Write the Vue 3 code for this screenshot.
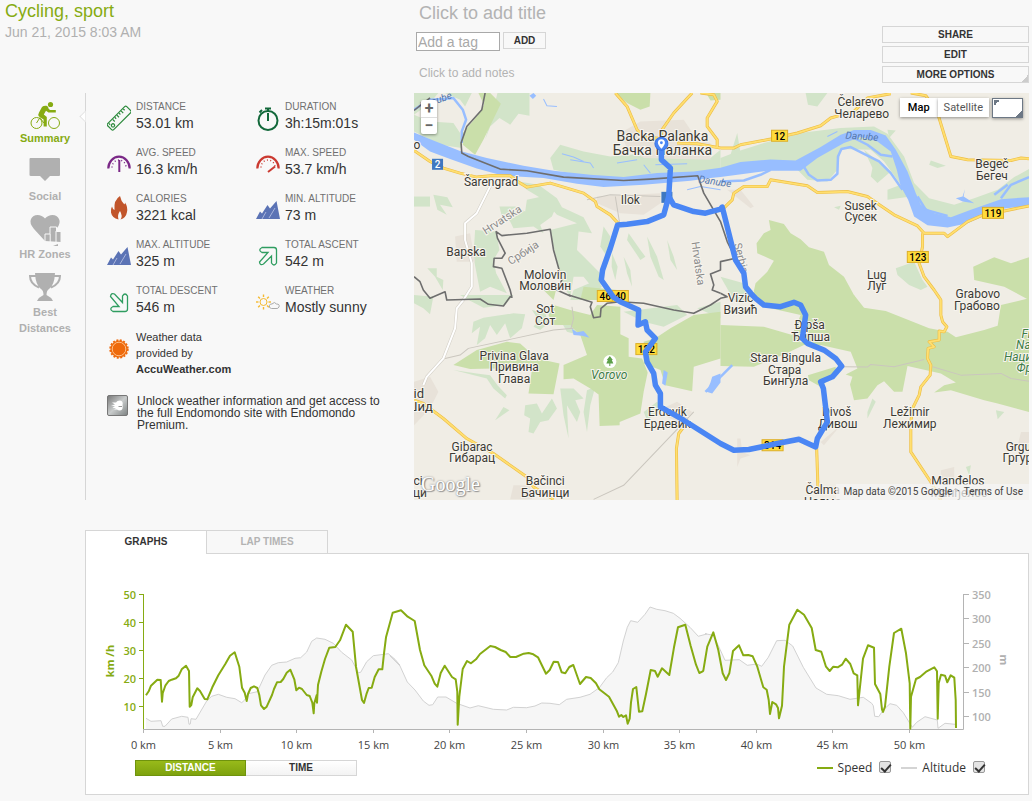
<script setup>
import { ref } from 'vue'

// Drawing sheets: each holds its top-left corner; its points are in thirds of a pixel.
const sheets = {
  A: [410, 90], B: [720, 90], C: [410, 295], D: [720, 295],
  P: [80, 520], Q: [390, 570], R: [700, 570],
}
function trace(...parts) {
  return parts.map((part) => {
    const [x0, y0] = sheets[part[0]]
    return part.slice(1).trim().split(/\s+/).map((pair) => {
      const [x, y] = pair.split(',').map(Number)
      return `${(x0 + x / 3).toFixed(1)},${(y0 + y / 3).toFixed(1)}`
    }).join(' ')
  }).join(' ')
}

const lightGreens = [
  'A 12,10 85,10 60,40 12,75', 'A 105,10 185,10 165,50 150,30', 'A 262,10 358,10 358,78 325,72 300,105 268,85 240,110 225,150 250,60',
  'A 12,75 60,95 130,100 150,130 155,175 90,165 12,125',
  'A 420,205 450,165 520,185 600,200 690,192 900,205 930,180 930,240 850,262 620,265 540,262 430,240',
  'A 12,320 60,320 60,350 12,350', 'A 70,315 112,322 128,352 90,345 110,375 82,360',
  'A 268,350 315,350 345,365 350,330 395,320 440,345 425,380 390,405 400,430 370,410 310,415 300,395 275,380',
  'A 325,275 385,285 440,325 455,352 520,382 545,430 505,425 500,480 540,520 580,560 560,610 520,560 490,560 480,620 460,590 430,470 420,420 500,400 440,375 400,330 350,300',
  'A 195,420 258,425 268,480 250,510 258,550 290,610 240,590 210,605 190,500',
  'A 52,535 80,535 80,560 100,570 98,600 75,560', 'A 580,410 600,440 590,500 570,470', 'A 490,600 560,570 575,590 530,630 480,630',
  'A 655,430 690,480 705,500 690,510 650,450', 'A 710,440 740,500 760,570 745,560 720,500', 'A 640,500 660,540 665,590 650,550',
  'A 770,450 790,500 800,540 780,510', 'A 605,490 622,530 615,570 604,530',
  'B 0,205 50,185 130,160 250,128 360,115 460,110 500,132 550,200 580,280 625,325 700,345 760,325 830,300 880,262 924,238 924,330 840,330 700,385 610,385 570,320 500,330 500,300 540,285 490,215 450,180 360,178 350,240 320,275 260,270 230,240 0,245',
  'B 255,10 320,10 290,50 262,45', 'B 630,212 675,228 650,235 625,225', 'B 340,352 360,348 355,360',
  'B 500,120 525,122 505,145', 'B 525,535 580,515 605,570 620,590 600,600 565,585 530,555', 'B 430,180 490,230 505,250 470,280 450,260 455,235',
  'B 50,130 60,190 30,195', 'B 0,560 70,580 130,630 40,630',
  'C 12,0 70,5 60,58 40,40 12,25', 'C 150,0 310,0 285,30 220,38 170,12', 'C 190,80 220,68 310,55 345,58 335,100 300,130 285,85 260,120 240,90 225,130 200,150 210,95 185,115',
  'C 365,45 405,55 415,85 390,105 370,95 385,75', 'C 640,50 800,30 830,60 760,95 700,80', 'C 450,75 480,90 560,100 570,160 540,130 470,110',
  'C 130,225 200,235 240,240 262,270 290,300 285,310 250,280 230,250', 'C 255,375 280,335 298,345',
  'C 345,330 380,325 395,355 425,310 440,340 415,375 390,380 370,415 355,410 360,370 342,360',
  'C 450,280 490,280 520,310 495,315 510,350 500,380 470,330 475,430 460,360', 'C 530,285 555,275 540,330 530,410 520,350',
  'C 700,350 740,320 760,340 710,375', 'D 440,350 455,310 465,320 440,370', 'D 735,515 750,510 745,540', 'D 825,345 850,350 830,372', 'C 860,40 930,20 930,70',
]
const darkGreens = [
  'A 205,10 240,10 272,42 220,150 195,195 158,165 158,130 200,80 222,45', 'A 615,10 720,10 718,50 690,60 650,40', 'A 870,10 930,10 930,30 900,32 890,15', 'A 400,600 440,590 430,630',
  'B 145,390 190,402 210,430 240,448 265,472 310,485 325,525 370,560 405,625 95,625 105,580 140,545 160,512 110,490 108,460 130,430 150,420',
  'B 757,530 820,502 870,520 924,502 924,630 850,590 760,570',
  'D 80,0 400,0 430,38 495,48 580,82 625,100 680,110 705,127 790,105 830,92 840,30 924,10 924,350 830,325 790,315 690,285 640,292 670,270 705,262 660,235 560,213 545,290 520,290 490,258 470,270 440,310 400,315 388,268 395,245 375,238 410,220 390,170 300,150 250,150 190,178 100,215 0,213 0,90 130,95 215,120 240,60 150,40',
  'D 262,240 345,215 345,235 300,275 265,255',
  'C 130,210 200,165 290,140 330,145 380,190 448,205 430,297 355,295 365,225 250,220 180,222',
  'C 430,30 480,45 540,60 560,30 630,35 630,118 655,130 655,185 695,190 712,232 700,290 690,355 628,380 628,390 568,392 565,298 540,280 490,250 460,252 460,210 530,180 510,120 480,90 430,90 415,60',
  'C 700,140 735,130 780,100 850,60 930,50 930,190 850,215 845,288 765,270 750,225 700,205',
  'A 520,590 620,600 635,630 510,630',
]
const towns = [
  'A 630,130 690,95 820,90 860,150 900,160 900,210 700,205 650,175', 'A 560,320 750,310 750,340 700,375 630,370 560,340', 'A 135,440 180,430 195,515 140,515',
  'C 12,260 60,245 85,290 60,340 12,390', 'C 765,335 800,320 845,350 815,385 770,365', 'B 20,300 60,300 100,350 90,355', 'D 300,440 360,390 310,450', 'D 50,430 60,430 65,470 90,480 60,490 50,515', 'C 310,570 360,570 365,612 300,612', 'D 660,525 700,515 700,550 660,555', 'D 900,410 924,410 924,455 890,450',
]
const rivers = [
  ['A 12,128 70,152 150,184 230,205 340,228 430,243 540,255 640,262 740,250 850,245 930,234', 'B 60,217 150,209 225,212 300,172 360,135 400,121 450,121 495,137 525,180 560,245 585,310 600,345 640,370 690,382 750,360 840,328 924,322', 'B 924,348 850,356 780,382 740,400 680,413 620,406 580,380 562,330 540,290 528,240 510,185 470,155 420,142 370,160 290,205 240,243 140,243 0,262', 'A 900,265 840,273 700,285 580,292 500,282 400,265 280,258 200,236 120,208 60,185 12,150'],
  ['C 485,102 500,112 520,108 538,128 515,122 490,120'], ['C 760,225 772,232 765,272 755,265'], ['C 930,235 905,245 900,262 888,290 905,295 930,262'],
  ['B 705,325 725,320 732,298 728,320 760,340 725,335'], ['A 358,18 370,10 378,18 368,28'],
]
const streams = [
  'A 12,60 60,30 100,28 130,25 158,60 168,90 155,125 155,160', 'B 240,215 265,255 290,272 330,270 350,252 352,200 362,178 390,172 430,192 475,215 510,250 545,300', 'B 380,135 440,165 480,195 515,200', 'B 590,320 615,360 680,378', 'B 840,325 870,285 924,262', 'B 0,275 70,272 120,255 150,240', 'B 820,315 860,285', 'C 885,290 930,245', 'D 0,245 35,210',
]
const thinStreams = ['A 400,28 410,48 440,50', 'A 455,192 490,202 520,215', 'A 480,210 540,220 550,235', 'A 620,220 680,210', 'A 735,225 830,222', 'A 700,225 720,250', 'A 830,300 870,290 930,300', 'B 320,140 350,125']
const grayRoads = [
  'C 105,190 150,180 175,160 300,133 430,105 490,100', 'C 485,35 490,70 482,100', 'C 550,612 640,570 850,350', 'D 370,215 440,216 450,208 520,215 610,193', 'D 635,215 720,240 840,235 870,250 924,258', 'A 530,330 600,315 750,320', 'A 628,400 615,320',
]
const whiteRoads = ['A 245,280 200,370 165,400 165,450 185,520 185,590 160,630', 'C 160,15 140,40 135,100 100,190 50,245 40,270']
const yellowRoads = [
  ['A 12,182 60,215 100,235 150,250 200,262 250,257 300,258 330,280 350,292 420,280 470,295 520,310 555,335 560,350 600,375 625,402'],
  ['A 615,10 650,50 680,120 700,142 750,146'], ['A 845,10 790,70 755,120 750,150'], ['A 800,160 860,162 930,175'], ['A 870,10 910,15 920,35 890,85 890,110 920,150 920,175'],
  ['B 0,175 40,175 60,165 150,148 230,130 300,108 330,85 400,65 440,25 510,12'], ['B 570,10 615,18 650,70 690,200 740,210 870,212 900,205 924,207'],
  ['B 10,355 35,330 40,310 70,290 140,290 150,270 260,288 290,308 380,305 440,320 480,348 520,375 590,408 610,430 670,430 680,440 740,395 780,378 924,348'],
  ['B 605,430 605,470 595,520 610,560 640,600 655,622', 'D 660,15 660,60 665,80 678,95 670,110 655,108 655,135 625,140 640,155 622,160 620,190 630,210 628,240 600,275 595,300 575,340 570,380 570,470 630,560 660,615'],
  ['D 288,460 292,575'], ['C 12,315 40,325 100,370 170,430 250,475 350,545 370,575 430,612'], ['C 835,375 805,415 798,460 800,615'],
]
const borders = [
  ['A 225,10 215,60 170,110 153,160 155,190 175,200 270,238 350,243 460,262 640,272 720,268 862,258 880,310 930,395', 'B 20,455 45,505 0,515', 'A 930,540 900,552 910,585 905,600 930,610'],
  ['C 475,0 480,2', 'A 480,618 440,600 455,570', 'A 455,570 430,480 420,418 350,430 275,437 258,425 262,445 285,490 275,505 252,505 250,530 275,535 300,600 305,622', 'C 300,5 280,33 235,28 210,12 110,15', 'A 105,605 60,625 40,600 30,575 12,560'],
  ['C 475,0 545,22 540,35 550,68 570,65 572,40 590,25 630,20 700,25 790,45 850,55 900,30 930,10', 'D 20,5 0,-5'],
  ['A 12,62 60,25'],
]
const route = trace(
  'A 753,170 753,210 780,235 775,320 760,375 710,395 650,403 622,405 600,475 577,540 573,570 610,622',
  'C 630,20 685,45 683,90 705,80 710,105 735,130 705,170 710,200 730,235 735,270 750,295 750,335 820,375 930,445',
  'D 40,465 85,463 170,445 235,432 285,455 290,430 320,380 308,280 300,260 335,245 363,213 345,190 310,165 260,145 245,130 255,60 240,30 220,22 180,35 130,30 105,10',
  'B 95,615 75,590 70,550 45,510 30,450 10,370 5,352',
  'A 930,358 885,370 850,365 790,345 775,320',
)

const places = [
  ['Čelarevo', 860, 106], ['Челарево', 861, 118], ['Begeč', 991, 168], ['Бегеч', 991, 180], ['Susek', 860, 210], ['Сусек', 860, 221],
  ['Lug', 876, 279], ['Луг', 876, 290], ['Grabovo', 977, 298], ['Грабово', 976, 310], ['Bapska', 466, 256], ['Ilok', 630, 204],
  ['Šarengrad', 491, 186], ['Molovin', 545, 279], ['Моловин', 545, 290], ['Sot', 545, 313], ['Сот', 545, 325],
  ['Privina Glava', 514, 360], ['Привина', 514, 371], ['Глава', 514, 383], ['Erdevik', 667, 416], ['Ердевик', 667, 428],
  ['Gibarac', 472, 451], ['Гибарац', 472, 462], ['Bačinci', 545, 485], ['Бачинци', 545, 497], ['Vizić', 740, 302], ['Визић', 740, 314],
  ['Đipša', 809, 329], ['Ђипша', 810, 341], ['Stara Bingula', 785, 362], ['Стара', 784, 374], ['Бингула', 785, 385],
  ['Divoš', 836, 416], ['Дивош', 837, 428], ['Ležimir', 909, 416], ['Лежимир', 909, 428], ['Čalma', 822, 494], ['Чалма', 822, 506],
  ['Manđelos', 957, 485], ['Манђелос', 958, 497], ['o', 417, 149], ['ci', 418, 485], ['ци', 420, 497],
  ['Grgurevci', 1030, 451], ['Гргуревци', 1030, 462],
]
const tilted = [
  ['Danube', 714, 185, 9, 'water'], ['Danube', 861, 140, 4, 'water'], ['Danube', 437, 104, -20, 'water'],
  ['Hrvatska', 504, 223, -33, 'country'], ['Србија', 525, 256, -33, 'country'], ['Hrvatska', 694, 264, 82, 'country'], ['Serbia', 737, 259, 76, 'country'],
]
const shields = [['12', 779, 136, 16], ['119', 992, 213, 21], ['123', 917, 257, 21], ['46', 605, 296, 16], ['40', 620, 296, 16], ['122', 646, 349, 21], ['314', 772, 445, 21]]

const speed = trace(
  'P 198,526 206,514 213,497 232,479 242,480 246,545 248,520 256,497 266,483 275,479 288,475 296,467 305,448 318,437 327,453 329,560 334,555 338,532 352,505 360,513 374,537 382,538 397,502 415,466 436,432 450,407 464,397 478,440 486,503 494,518 500,543 504,522 512,504 522,499 532,504 538,525 543,556 552,567 560,560 576,525 582,507 591,487 602,486 610,477 620,458 631,449 643,478 649,511 657,503 666,507 680,525 689,528 697,548 701,580 703,550 710,525 711,548 714,495 724,455 735,417 748,383 766,381 780,361 798,314 818,335 828,440 846,540 852,549 860,520 866,504 875,503 884,471 896,448 907,448 912,400 918,352 938,278 963,271',
  'Q 53,140 74,153 90,240 103,286 124,317 134,341 142,350 152,309 164,287 186,321 197,328 202,365 203,464 208,380 218,297 231,273 243,280 258,268 270,252 301,228 315,231 332,240 347,246 361,261 378,261 401,251 416,249 430,253 444,262 468,311 479,300 491,275 504,276 515,307 526,310 538,291 550,285 570,342 588,321 602,324 618,340 628,358 657,380 680,422 687,440 694,435 700,441 708,436 713,461 719,446 723,397 729,357 739,351 747,425 757,424 768,372 782,300 795,303 803,320 816,295 838,315 852,232 864,172 886,164 902,228 918,284 928,309 938,304',
  'R 10,302 22,230 40,187 55,240 68,310 78,330 88,310 99,243 117,226 130,256 145,255 158,259 172,290 190,352 200,359 206,390 210,432 217,396 228,403 234,414 237,445 246,407 252,290 268,164 292,119 312,134 335,174 347,240 364,245 378,290 389,303 400,290 413,292 426,284 437,266 451,282 461,310 472,316 474,406 489,266 504,226 522,233 525,342 541,372 546,418 549,426 555,410 568,290 582,189 604,176 618,250 629,340 631,476 633,380 648,327 660,321 680,304 703,292 711,304 713,446 716,340 723,314 735,317 742,337 752,316 763,323 767,390 768,474',
)
const altitude = trace(
  'P 198,595 213,604 243,602 248,619 255,619 275,597 305,589 324,592 327,613 331,612 333,596 348,598 380,543 395,529 415,523 440,532 465,536 485,548 494,540 505,521 532,515 555,465 575,436 595,428 620,426 645,415 662,413 680,396 695,364 710,354 735,358 760,370 785,397 815,420 835,458 842,457 860,425 880,407 925,401 945,418 960,436',
  'Q 0,257 30,288 52,336 75,360 100,393 117,406 128,404 143,381 168,381 200,400 240,414 265,407 310,418 350,420 370,412 410,413 435,408 455,399 480,400 508,404 530,388 570,382 600,373 628,353 650,323 668,306 685,278 700,213 712,172 722,152 743,157 765,133 780,111 800,118 825,122 850,130 870,145 900,172 925,199 950,192',
  'R 15,191 40,196 60,238 75,271 118,269 142,286 170,282 185,289 205,262 230,212 255,211 278,228 310,292 348,354 380,373 415,377 450,388 490,382 515,400 520,407 524,439 536,440 550,420 570,401 590,406 610,428 637,472 650,457 675,440 712,450 714,475 735,460 765,463',
)
const altitudeArea = `146,729 ${altitude} 955,729`

const metrics = [
  ['ruler', 'Distance', '53.01 km'], ['watch', 'Duration', '3h:15m:01s'],
  ['avg', 'Avg. speed', '16.3 km/h'], ['max', 'Max. speed', '53.7 km/h'],
  ['flame', 'Calories', '3221 kcal'], ['hills', 'Min. altitude', '73 m'],
  ['hills', 'Max. altitude', '325 m'], ['ascent', 'Total ascent', '542 m'],
  ['descent', 'Total descent', '546 m'], ['weather', 'Weather', 'Mostly sunny'],
]
const nav = [['bike', 'Summary'], ['social', 'Social'], ['heart', 'HR Zones'], ['cup', 'Best Distances']]
const rays = Array.from({ length: 8 }, (_, i) => i * 45)
const kmTicks = Array.from({ length: 11 }, (_, i) => ({ x: 143.5 + Math.round(i * 76.6), text: `${i * 5} km` }))
const speedTicks = [50, 40, 30, 20, 10].map((value, i) => ({ value, y: 594.5 + i * 28 }))
const altTicks = [350, 300, 250, 200, 150, 100].map((value, i) => ({ value, y: 594.5 + Math.round(i * 24.4) }))

const showSpeed = ref(true)
const showAltitude = ref(true)
const mode = ref('Distance')
const tag = ref('')
</script>

<template>
  <main class="page">
    <header class="top">
      <div class="heading">
        <h1>Cycling, sport</h1>
        <time>Jun 21, 2015 8:03 AM</time>
      </div>
      <div class="notes">
        <button class="ghost big">Click to add title</button>
        <form class="tags" @submit.prevent>
          <input v-model="tag" type="text" aria-label="Add a tag" placeholder="Add a tag">
          <button class="btn add">ADD</button>
        </form>
        <button class="ghost">Click to add notes</button>
      </div>
      <div class="actions">
        <button class="btn">SHARE</button>
        <button class="btn">EDIT</button>
        <button class="btn more">MORE OPTIONS</button>
      </div>
    </header>

    <div class="body">
      <nav class="side">
        <a v-for="([icon, text], i) in nav" :key="text" href="#" :class="{ on: i === 0 }">
          <svg width="34" height="32" viewBox="0 0 34 32">
            <g v-if="icon === 'bike'">
              <g fill="none" stroke="currentColor"><circle cx="8.500" cy="25" r="5.500" /><circle cx="26" cy="25" r="5.500" /></g>
              <circle cx="22.500" cy="6.500" r="2.600" fill="currentColor" />
              <path d="M14 9 Q15.500 7.500 18.500 7.800 Q20.500 8.500 20.500 10.500 L22 12 H27.800 V14.500 H20.500 L18 12.800 L15.800 16.500 L18.800 19 V28.500 H15.600 V21.500 L11 18.500 Q9.500 17 11 14.500Z" fill="currentColor" />
              <path d="M8.500 25 L12 19.500 L15.800 25" fill="none" stroke="currentColor" />
            </g>
            <path v-else-if="icon === 'social'" d="M2.500 2 H31 Q32 2 32 3 V19 Q32 20 31 20 H22 L17 25 L12 20 H3 Q1.500 20 1.500 19 V3 Q1.500 2 2.500 2Z" fill="currentColor" />
            <g v-else-if="icon === 'heart'">
              <path d="M17 27 L6 15 Q1 9 3 5 Q5 1 9.500 1 Q14 1 17 4.500 Q20 1 24.500 1 Q29 1 31 5 Q33 9 29 14Z" fill="currentColor" />
              <path d="M17 27 V20 H22 V13 H28.500 V17.500 H33 V28" fill="currentColor" stroke="#f8f8f8" />
              <path d="M22.200 20 V28 M28 17 V28" stroke="#f8f8f8" />
              <path d="M25 32 L30 30 V32Z" fill="currentColor" />
            </g>
            <g v-else>
              <path d="M7 1 H27 Q26.500 13 21 17 Q18.500 18.500 18.500 23 Q23 25 25 29 H9 Q11 25 15.500 23 Q15.500 18.500 13 17 Q7.500 13 7 1Z" fill="currentColor" />
              <path d="M8 4 H2 Q2 12 11 15.500 M26 4 H32 Q32 12 23 15.500" fill="none" stroke="currentColor" stroke-width="2" />
            </g>
          </svg>
          <span>{{ text }}</span>
        </a>
      </nav>

      <section class="summary">
        <i class="pointer"></i>
        <div class="metrics">
          <div v-for="[icon, label, value] in metrics" :key="label" class="metric">
            <svg width="24" height="30" viewBox="0 0 24 30">
              <g v-if="icon === 'ruler'" transform="rotate(-45 12 17)" fill="none" stroke="#2c8a3c" stroke-width="1.200">
                <rect x="-1.500" y="13" width="27" height="8.500" rx="1.500" /><circle cx="2.500" cy="18" r="1.600" />
                <path d="M6.500 13.500 V16.500 M9.500 13.500 V15.500 M12.500 13.500 V16.500 M15.500 13.500 V15.500 M18.500 13.500 V16.500 M21.500 13.500 V15.500 M1 13.500 V15.500" />
              </g>
              <g v-else-if="icon === 'watch'" fill="none" stroke="#12683a" stroke-width="2">
                <circle cx="12" cy="19.500" r="9.500" /><path d="M9 7.500 H15 M12 7 V10 M3.500 11.500 L6 9 M12 12 V20" />
              </g>
              <g v-else-if="icon === 'avg' || icon === 'max'" :stroke="icon === 'avg' ? '#7b2987' : '#cb3a31'" fill="none">
                <path d="M1.300 21.500 A10.700 11.800 0 1 1 22.700 21.500" stroke-width="2.200" />
                <path d="M5 20.500 A7 7.500 0 0 1 19 20.500" stroke-width="1.400" stroke-dasharray="1 2.400" />
                <path v-if="icon === 'avg'" d="M12.300 13 V25" stroke-width="2" />
                <path v-else d="M12 25 L19 19.500" stroke-width="2" />
              </g>
              <path v-else-if="icon === 'flame'" d="M13 3 Q14 8 17 11 Q18 12 18 9.500 Q21 14 20 19 Q19 25 13.500 26.500 Q16 23 13 18 Q10 22 11.500 26.500 Q5 25 4 19.500 Q3.500 16 5 13.500 Q5.500 16 7.500 17 Q6.500 7 13 3Z" fill="#c1552b" />
              <g v-else-if="icon === 'hills'">
                <path d="M0 26 L4 18.500 L6 20.500 L11.500 12 L14 15.500 L20.500 8 L24 26Z" fill="#5b73b5" />
                <path d="M6 26 L10 19 M13 25 L19 15" stroke="#a9b5dc" fill="none" />
              </g>
              <path v-else-if="icon === 'ascent'" d="M6 8.500 H18 Q20.500 8.500 20.500 11 V24 Q18 28 15.500 24 V17 L7.500 25 Q4 27 3.500 23 L12 13.500 H6 Q1.500 11 6 8.500Z" fill="none" stroke="#2f9d60" stroke-width="1.300" />
              <path v-else-if="icon === 'descent'" d="M6 26.500 H18 Q20.500 26.500 20.500 24 V11 Q18 7 15.500 11 V17.500 L7.500 9 Q4 7.500 3.500 11.500 L12 21.500 H6 Q1.500 24 6 26.500Z" fill="none" stroke="#2f9d60" stroke-width="1.300" />
              <g v-else fill="none" transform="translate(0 2)">
                <circle cx="7.500" cy="15" r="3.500" stroke="#f5b92e" />
                <path v-for="r in rays" :key="r" d="M7.500 10 V7.500" :transform="`rotate(${r} 7.500 15)`" stroke="#f5b92e" stroke-width="1.400" />
                <path d="M15.500 21.500 Q12.500 21 13.500 18.500 Q14 16.500 16 17 Q18.500 14 20.500 17 Q24 17 23 20 Q22 22 20 21.500Z" fill="#f8f8f8" stroke="#aaa" />
              </g>
            </svg>
            <div><small>{{ label }}</small><b>{{ value }}</b></div>
          </div>
        </div>
        <div class="provider">
          <svg width="24" height="24" viewBox="0 0 24 24">
            <circle cx="12" cy="12" r="8.600" fill="#ee6a0c" />
            <circle cx="12" cy="12" r="8.800" fill="none" stroke="#ee6a0c" stroke-width="1.800" stroke-dasharray="2 1.500" />
            <circle cx="12" cy="12" r="6.800" fill="none" stroke="#ffc088" />
          </svg>
          <p>Weather data<br>provided by<br><a href="#">AccuWeather.com</a></p>
        </div>
        <div class="premium">
          <svg width="21" height="21" viewBox="0 0 21 21">
            <defs><linearGradient id="steel" x2="1" y2="1"><stop stop-color="#777" /><stop offset="0.500" stop-color="#c9cccc" /><stop offset="1" stop-color="#7c8181" /></linearGradient></defs>
            <rect x="0.500" y="0.500" width="20" height="20" rx="1.500" fill="url(#steel)" stroke="#777" />
            <path d="M5 7.500 H9 Q10 5.500 13 5.500 Q16.500 6 15.500 10 Q16.500 15 13 15.500 Q11 15.500 10 14.500 H7 L9 13 H5.500 L8 11 H4 L8 9.500Z" fill="#fff" /><path d="M11.500 11.500 H15" stroke="#999" />
          </svg>
          <p>Unlock weather information and get access to the full Endomondo site with Endomondo Premium.</p>
        </div>
      </section>

      <section class="map">
        <svg class="canvas" viewBox="414 93 614 407" preserveAspectRatio="xMidYMid slice">
          <rect x="414" y="93" width="614" height="407" fill="#f0ede5" />
          <polygon v-for="(p, i) in lightGreens" :key="'l' + i" :points="trace(p)" fill="#d2e4c9" />
          <polygon v-for="(p, i) in darkGreens" :key="'d' + i" :points="trace(p)" fill="#cadfaa" />
          <polygon v-for="(p, i) in towns" :key="'t' + i" :points="trace(p)" fill="#e8e2d9" />
          <polygon v-for="(p, i) in rivers" :key="'r' + i" :points="trace(...p)" fill="#98beff" />
          <g fill="none" stroke-linejoin="round">
            <polyline v-for="(p, i) in streams" :key="'s' + i" :points="trace(p)" stroke="#98beff" stroke-width="2.500" />
            <polyline v-for="(p, i) in thinStreams" :key="'h' + i" :points="trace(p)" stroke="#98beff" />
            <polyline v-for="(p, i) in grayRoads" :key="'g' + i" :points="trace(p)" stroke="#cac6be" />
            <polyline v-for="(p, i) in whiteRoads" :key="'w' + i" :points="trace(p)" stroke="#d2cec5" stroke-width="3" />
            <polyline v-for="(p, i) in whiteRoads" :key="'v' + i" :points="trace(p)" stroke="#fff" stroke-width="2" />
            <polyline v-for="(p, i) in yellowRoads" :key="'o' + i" :points="trace(...p)" stroke="#edbd45" stroke-width="3" />
            <polyline v-for="(p, i) in yellowRoads" :key="'y' + i" :points="trace(...p)" stroke="#ffdf70" stroke-width="1.800" />
            <polyline v-for="(p, i) in borders" :key="'b' + i" :points="trace(...p)" stroke="#6e6e6e" stroke-width="1.600" />
          </g>
          <g v-for="[text, x, y, w] in shields" :key="text" class="shield">
            <rect :x="x - w / 2" :y="y - 5.500" :width="w" height="11" fill="#ffdc3c" stroke="#dcae28" />
            <text :x="x" :y="y + 4">{{ text }}</text>
          </g>
          <g class="shield"><rect x="432" y="159" width="11" height="11" fill="#3f78c0" /><text x="437.500" y="168" class="blue">2</text></g>
          <rect x="661" y="192" width="11" height="11" fill="#3f78c0" />
          <g class="places">
            <text v-for="[text, x, y] in places" :key="text" :x="x" :y="y">{{ text }}</text>
            <g class="city"><text x="662" y="141">Backa Palanka</text><text x="662" y="155">Бачка Паланка</text></g>
            <text x="415" y="398" class="mid">Šid</text><text x="419" y="411" class="mid">Шид</text>
            <text v-for="([text, x, y, turn, kind], i) in tilted" :key="i" :x="x" :y="y" :class="kind" :transform="`rotate(${turn} ${x} ${y})`">{{ text }}</text>
            <g class="park"><text x="609" y="379">Vorovo</text><text x="1038" y="338">Fruška</text><text x="1038" y="349">Nacional</text><text x="1037" y="361">Национални</text><text x="1037" y="372">Фрушка</text></g>
          </g>
          <circle cx="609.500" cy="361.500" r="6.500" fill="#fff" />
          <path d="M609.500 356 L612.500 360 H611.500 L613 363.500 H610 V366 H609 V363.500 H606 L607.500 360 H606.500Z" fill="#5da04a" />
          <polyline :points="route" fill="none" stroke="#4a86f4" stroke-width="5.500" stroke-linejoin="round" stroke-linecap="round" />
          <circle cx="661" cy="144" r="6.500" fill="#4a86f4" stroke="#3874e6" />
          <path d="M661 149 Q657.500 145 657.500 143 A3.500 3.500 0 0 1 664.500 143 Q664.500 145 661 149Z" fill="#fff" /><circle cx="661" cy="143" r="1.400" fill="#4a86f4" />
        </svg>
        <div class="zoom"><button aria-label="Zoom in">+</button><button aria-label="Zoom out">−</button></div>
        <div class="types">
          <button class="sel">Map</button><button>Satellite</button>
          <button class="full" aria-label="Full screen"></button>
        </div>
        <span class="google">Google</span>
        <div class="credit">Map data ©2015 Google <span>·</span> <a href="#">Terms of Use</a></div>
      </section>
    </div>

    <section class="graphs">
      <div class="tabs">
        <button class="on">GRAPHS</button><button>LAP TIMES</button>
      </div>
      <div class="panel">
        <svg class="chart" viewBox="86 554 942 200">
          <template v-if="showAltitude">
            <polygon :points="altitudeArea" fill="#f6f6f6" />
            <polyline :points="altitude" fill="none" stroke="#d2d2d2" />
          </template>
          <path d="M143 729.500 H963.500 V594" fill="none" stroke="#b4b4b4" />
          <path d="M143.500 594 V729" stroke="#86ab12" />
          <g v-for="t in kmTicks" :key="t.text"><path :d="`M${t.x} 730 V733`" stroke="#b4b4b4" /><text :x="t.x" y="749" text-anchor="middle" class="km">{{ t.text }}</text></g>
          <g v-for="t in speedTicks" :key="t.value"><path :d="`M139 ${t.y} H143`" stroke="#86ab12" /><text x="136" :y="t.y + 4" text-anchor="end" class="kmh">{{ t.value }}</text></g>
          <g v-for="t in altTicks" :key="t.value"><path :d="`M964 ${t.y} H969`" stroke="#b4b4b4" /><text x="972" :y="t.y + 4" class="alt">{{ t.value }}</text></g>
          <text x="114" y="661" transform="rotate(-90 114 661)" text-anchor="middle" class="axis">km /h</text>
          <text x="1000" y="660" transform="rotate(90 1000 660)" text-anchor="middle" class="axis metres">m</text>
          <polyline v-if="showSpeed" :points="speed" fill="none" stroke="#86ab12" stroke-width="2" stroke-linejoin="round" />
        </svg>
        <div class="controls">
          <div class="switch">
            <button v-for="m in ['Distance', 'Time']" :key="m" :class="{ on: mode === m }" @click="mode = m">{{ m }}</button>
          </div>
          <div class="legend">
            <label><i></i>Speed <input v-model="showSpeed" type="checkbox"></label>
            <label><i class="pale"></i>Altitude <input v-model="showAltitude" type="checkbox"></label>
          </div>
        </div>
      </div>
    </section>
  </main>
</template>

<style>
body { background: #f8f8f8; }
</style>

<style scoped>
* { box-sizing: border-box; }
.page { font-family: "Liberation Sans", Arial, sans-serif; color: #333; padding-right: 3px; overflow: hidden; }
button { font: inherit; color: inherit; margin: 0; padding: 0; cursor: pointer; }
a { color: inherit; text-decoration: none; }
h1, p { margin: 0; }
.top { display: grid; grid-template-columns: 414px 1fr 147px; height: 93px; }
.heading { padding-left: 5px; }
h1 { font-size: 18px; line-height: 22px; font-weight: 400; color: #86ab12; }
time { display: block; font-size: 14px; line-height: 20px; color: #b0b0b0; }
.notes { display: flex; flex-direction: column; align-items: flex-start; padding-left: 2px; }
.ghost { border: 0; background: none; padding-left: 3px; color: #b3b3b3; font-size: 12px; line-height: 16px; }
.big { font-size: 18px; line-height: 26px; }
.tags { display: flex; gap: 3px; margin: 6px 0 14px; }
.tags input { width: 84px; height: 19px; border: 1px solid #a9a9a9; background: #fff; font: 14px "Liberation Sans", Arial, sans-serif; padding: 0 1px; }
.tags input::placeholder { color: #a9a9a9; opacity: 1; }
.btn { border: 1px solid #d6d6d6; background: #f8f8f8; height: 17px; font-size: 10px; line-height: 15px; font-weight: 700; }
.add { width: 43px; }
.actions { display: flex; flex-direction: column; gap: 3px; padding-top: 26px; }
.more { background: linear-gradient(135deg, transparent 50%, #ccc 50%) right bottom / 6px 8px no-repeat; }
.body { display: grid; grid-template-columns: 85px 329px 1fr; }
.side { display: flex; flex-direction: column; gap: 10px; padding: 5px 10px 0 15px; }
.side a { display: flex; flex-direction: column; align-items: center; text-align: center; font-size: 11px; font-weight: 700; line-height: 16px; color: #b0b0b0; }
.side a.on { color: #86ab12; }
.side svg { display: block; }
.summary { position: relative; border-left: 1px solid #d6d6d6; padding: 8px 0 0 21px; }
.pointer { position: absolute; left: -5px; top: 19px; width: 9px; height: 9px; background: #fff; border: 1px solid #dcdcdc; border-width: 0 0 1px 1px; transform: rotate(45deg); clip-path: polygon(0 0, 100% 100%, 0 100%); }
.metrics { display: grid; grid-template-columns: 149px 1fr; }
.metric { display: flex; gap: 5px; height: 46px; }
.metric small { display: block; font-size: 10px; line-height: 12px; color: #707070; text-transform: uppercase; }
.metric b { display: block; font-size: 14px; line-height: 20px; font-weight: 400; }
.provider { display: flex; gap: 5px; }
.provider svg { margin-top: 6px; }
.provider p { font-size: 11px; line-height: 16px; margin-top: -2px; }
.provider a { font-weight: 700; }
.premium { display: flex; gap: 9px; padding-top: 18px; }
.premium svg { flex: none; }
.premium p { font-size: 12px; line-height: 12px; width: 250px; }
.map { position: relative; aspect-ratio: 615 / 407; overflow: hidden; font-family: Roboto, sans-serif; }
.canvas { display: block; width: 100%; height: 100%; }
.shield text { font-size: 10px; font-weight: 500; text-anchor: middle; }
.shield .blue { fill: #fff; }
.places text { font-size: 12px; text-anchor: middle; fill: #3b3a35; stroke: #f7f4ee; stroke-width: 2px; paint-order: stroke; }
.places .city text { font-size: 14px; }
.places text.mid { font-size: 13px; }
.places text.water { font-size: 10px; fill: #5577ad; font-style: italic; stroke: none; }
.places text.country { font-size: 11px; fill: #8b8b8b; }
.places .park text { fill: #3c7d46; font-style: italic; }
.zoom { position: absolute; left: 7px; top: 7px; width: 16px; background: #fff; border-radius: 2px; box-shadow: 0 1px 3px #0006; }
.zoom button { display: block; width: 100%; height: 17px; border: 0; background: none; color: #666; font-size: 16px; line-height: 16px; font-weight: 700; }
.zoom button + button { border-top: 1px solid #ddd; }
.types { position: absolute; right: 6px; top: 5px; display: flex; font-size: 11px; }
.types button { height: 19px; padding: 0 6px; border: 0; background: #fff; color: #555; box-shadow: 0 1px 3px #0006; }
.types .sel { padding: 0 8px; color: #000; font-weight: 500; }
.types .full { width: 31px; height: 20px; margin-left: 3px; border: 1px solid #6d7885; background: linear-gradient(135deg, #6d7885 50%, transparent 50%) 1px 1px / 6px 6px no-repeat, linear-gradient(135deg, transparent 50%, #6d7885 50%) right bottom / 6px 6px no-repeat, #fff; }
.google { position: absolute; left: 7px; bottom: 2px; font: 20px/28px "Liberation Serif", serif; color: #fff; text-shadow: 0 0 2px #777, 1px 1px 1px #999; }
.credit { position: absolute; right: 0; bottom: 0; padding: 0 6px 0 7px; height: 16px; font-size: 10px; line-height: 16px; color: #444; background: #f5f5f5b8; }
.credit span { margin: 0 2px; }
.graphs { margin: 30px 0 0 85px; }
.tabs { display: flex; position: relative; }
.tabs button { width: 122px; height: 24px; padding-bottom: 2px; border: 1px solid #d6d6d6; background: #f8f8f8; font-size: 10px; font-weight: 700; color: #b3b3b3; }
.tabs button.on { background: #fff; border-width: 1px 0 0 1px; width: 121px; color: #333; }
.panel { border: 1px solid #d6d6d6; background: #fff; margin-top: -1px; padding-bottom: 18px; }
.chart { display: block; width: 100%; font: 11px "Open Sans", sans-serif; }
.km { fill: #444; }
.kmh { fill: #86ab12; font-weight: 600; }
.alt { fill: #b0b0b0; font-weight: 600; }
.axis { fill: #86ab12; font-weight: 700; }
.metres { fill: #b0b0b0; }
.controls { display: flex; justify-content: space-between; padding: 5px 42px 0 49px; }
.switch { display: flex; padding-top: 1px; }
.switch button { width: 111px; height: 16px; border: 1px solid #d6d6d6; border-left: 0; background: linear-gradient(#fff, #f3f3f3); font-size: 10px; line-height: 14px; font-weight: 700; text-transform: uppercase; }
.switch button.on { border: 1px solid #6f930d; background: linear-gradient(#98ba1a, #7ea20e); color: #fff; }
.legend { display: flex; gap: 9px; font: 12px/16px "Open Sans", sans-serif; }
.legend label { display: flex; align-items: center; }
.legend i { width: 16px; height: 2px; margin-right: 5px; background: #86ab12; }
.legend i.pale { background: #d4d4d4; }
.legend input { position: relative; appearance: none; width: 12px; height: 12px; margin: 0 1px 2px 7px; border: 1px solid #999; border-radius: 2px; background: #e4e4e4; }
.legend input:checked::after { content: ""; position: absolute; left: 3px; top: 0; width: 4px; height: 8px; border: solid #333; border-width: 0 2px 2px 0; transform: rotate(42deg); }
</style>
